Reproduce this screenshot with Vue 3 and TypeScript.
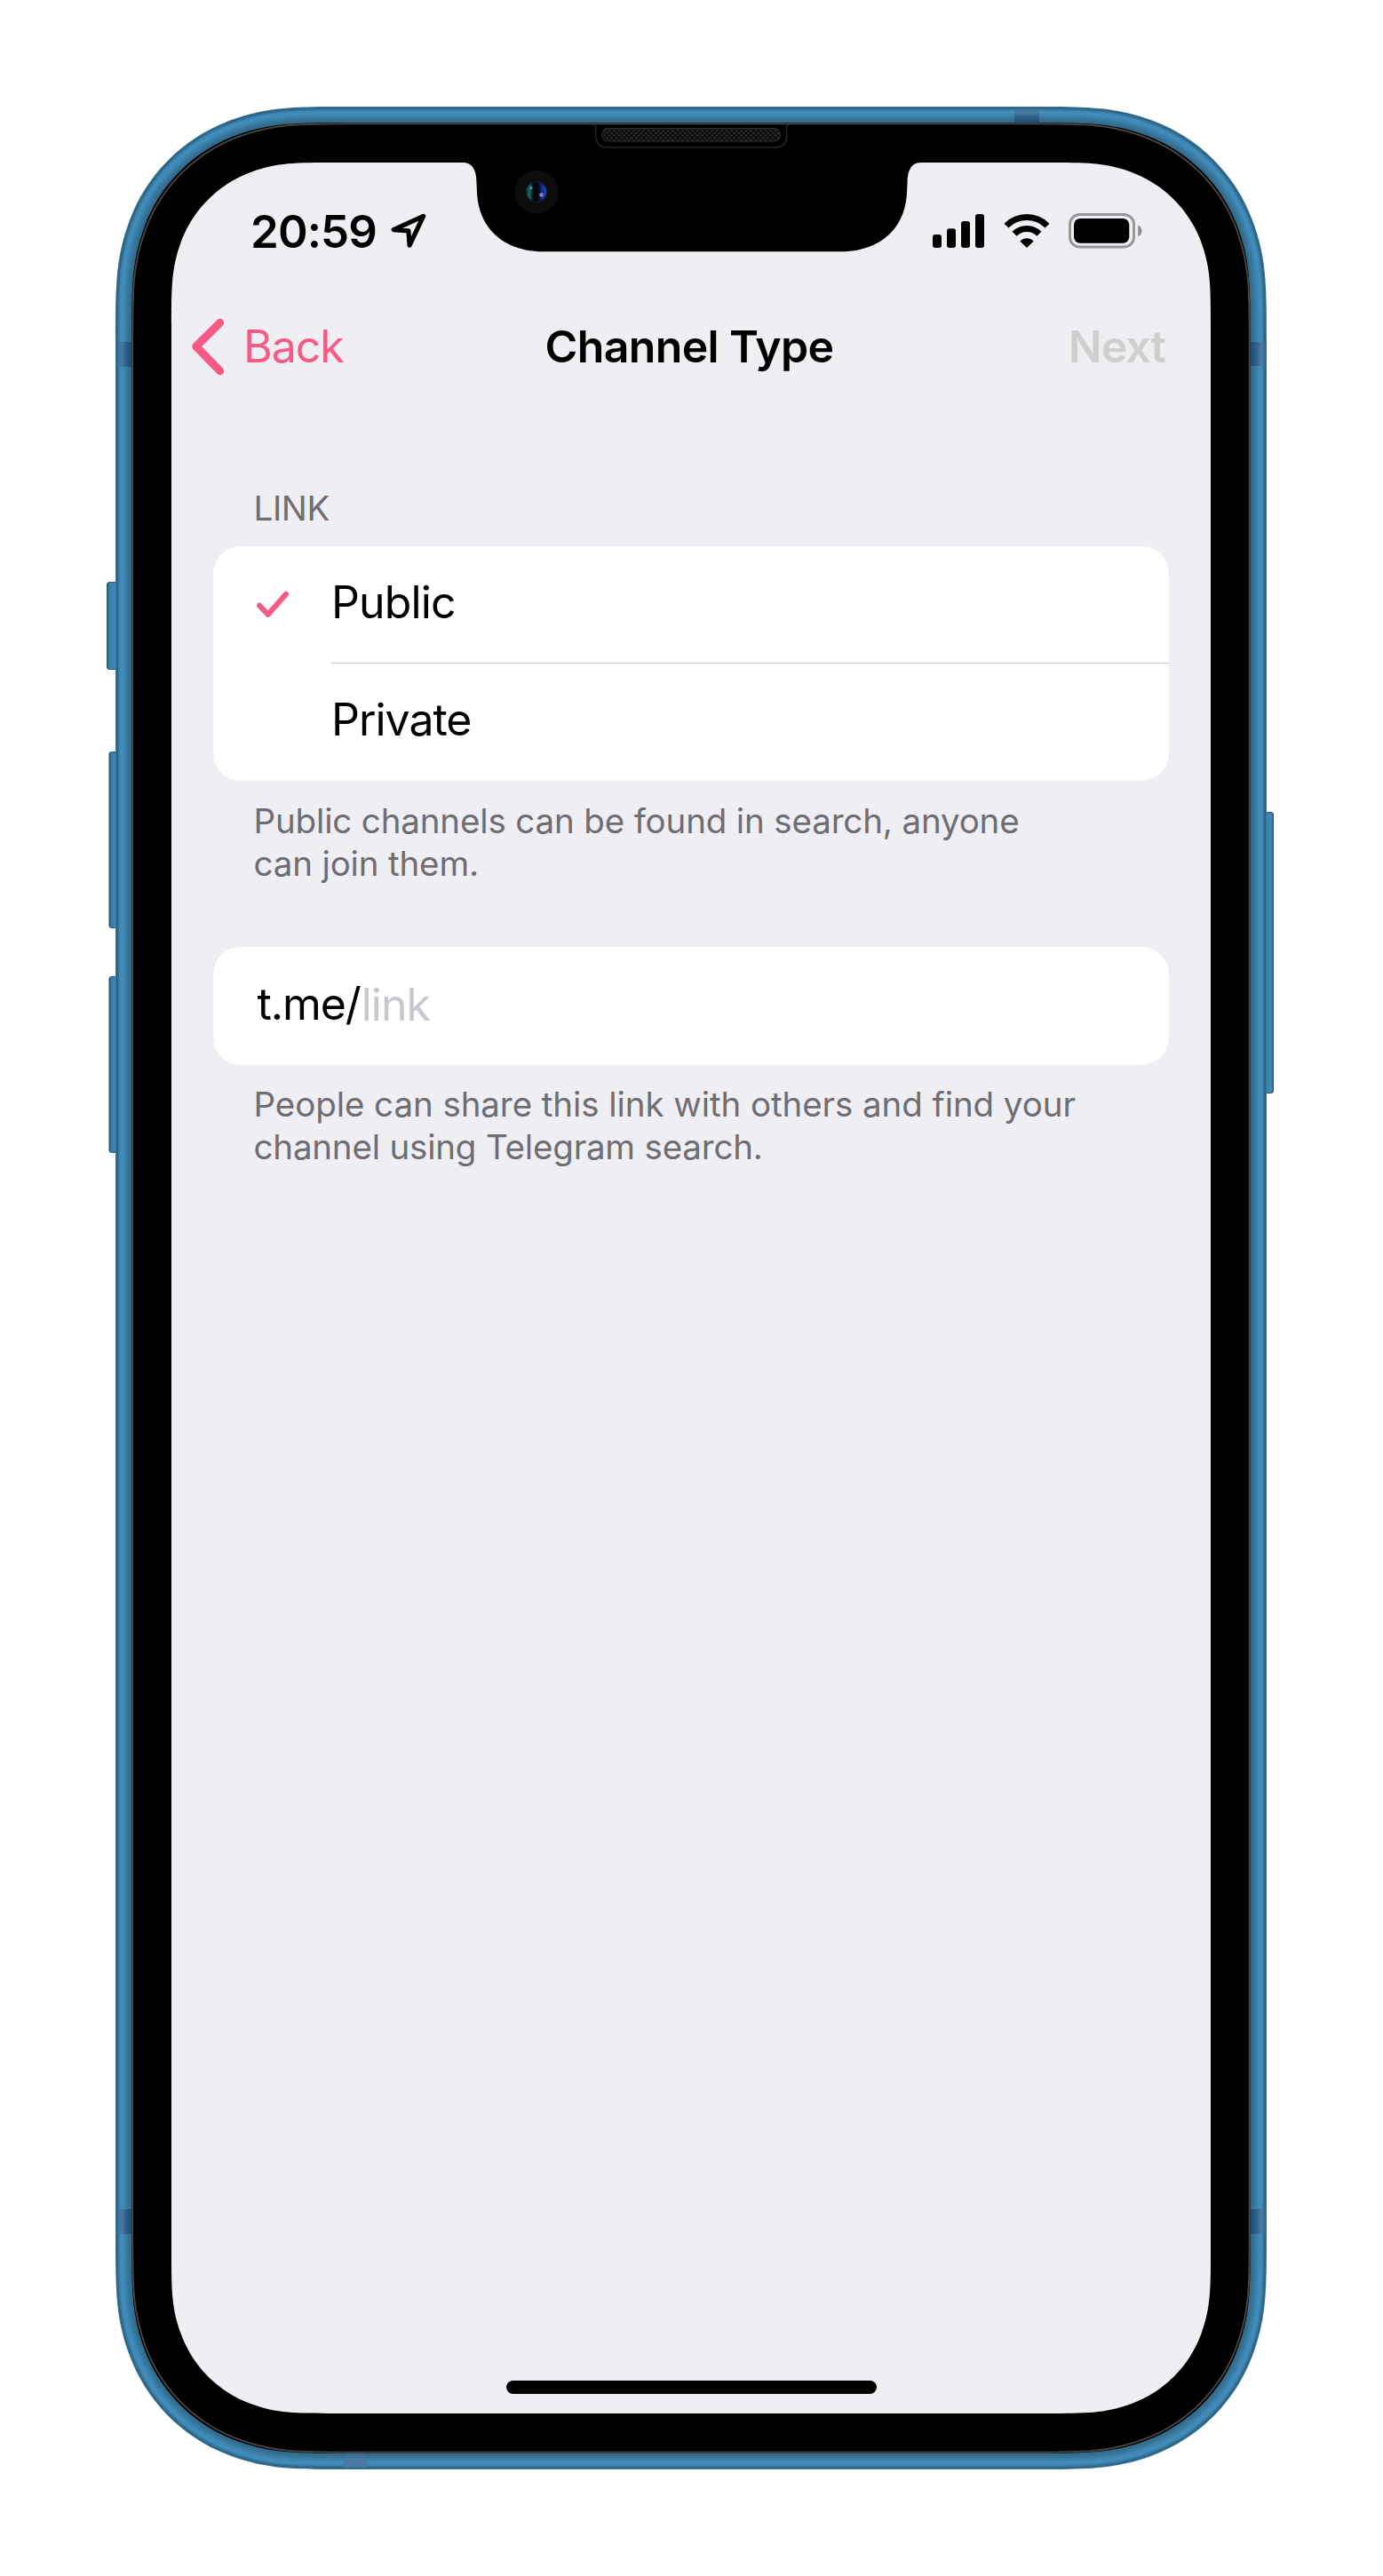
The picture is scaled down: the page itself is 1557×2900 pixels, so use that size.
<script setup lang="ts">
import { ref } from 'vue'

interface Option { id: string; label: string }

const options: Option[] = [
  { id: 'public', label: 'Public' },
  { id: 'private', label: 'Private' },
]
const selected = ref('public')

/** Rounded rectangle with continuous-curvature corners. */
function smoothRect(x: number, y: number, w: number, h: number, r: number): string {
  const a = 1.3 * r, b = 0.98 * r, c = 0.837 * r, d = 0.63149379 * r
  const e = 0.37282383 * r, f = 0.16905956 * r, g = 0.07491139 * r
  const R = x + w, B = y + h
  return [
    `M${x + a} ${y}H${R - a}`,
    `C${R - b} ${y} ${R - c} ${y} ${R - d} ${y + g}`,
    `C${R - e} ${y + f} ${R - f} ${y + e} ${R - g} ${y + d}`,
    `C${R} ${y + c} ${R} ${y + b} ${R} ${y + a}`,
    `V${B - a}`,
    `C${R} ${B - b} ${R} ${B - c} ${R - g} ${B - d}`,
    `C${R - f} ${B - e} ${R - e} ${B - f} ${R - d} ${B - g}`,
    `C${R - c} ${B} ${R - b} ${B} ${R - a} ${B}`,
    `H${x + a}`,
    `C${x + b} ${B} ${x + c} ${B} ${x + d} ${B - g}`,
    `C${x + e} ${B - f} ${x + f} ${B - e} ${x + g} ${B - d}`,
    `C${x} ${B - c} ${x} ${B - b} ${x} ${B - a}`,
    `V${y + a}`,
    `C${x} ${y + b} ${x} ${y + c} ${x + g} ${y + d}`,
    `C${x + f} ${y + e} ${x + e} ${y + f} ${x + d} ${y + g}`,
    `C${x + c} ${y} ${x + b} ${y} ${x + a} ${y}Z`,
  ].join('')
}

const body = (inset: number, r = 205 - inset) =>
  smoothRect(130 + inset, 120 + inset, 1296 - 2 * inset, 2660 - 2 * inset, r)

// Metal rim, from the outer edge towards the glass.
const rim: [number, string][] = [
  [0, '#3b7695'], [1, '#2d627f'], [2, '#31698a'], [3, '#37779f'], [4, '#3c82ae'], [5, '#4089b7'],
  [6, '#428cba'], [8, '#408ab8'], [9, '#3f87b3'], [10, '#3d83ae'], [11, '#3b7fa8'], [12, '#3a7ba2'],
  [13, '#38779c'], [14, '#367397'], [15, '#357093'], [16, '#346d8f'], [17, '#336a8b'], [18.3, '#000'],
]

const cardClip = (h: number) => ({ clipPath: `path("${smoothRect(0, 0, 1076, h, 31)}")` })
</script>

<template>
  <main class="page">
    <svg class="device" width="1557" height="2900" viewBox="0 0 1557 2900" aria-hidden="true">
      <defs>
        <linearGradient id="keyL"><stop offset="0" stop-color="#255a76" /><stop offset=".2" stop-color="#3a80aa" /><stop offset=".65" stop-color="#3f8ab8" /><stop offset="1" stop-color="#336f92" /></linearGradient>
        <linearGradient id="keyR"><stop offset="0" stop-color="#336f92" /><stop offset=".35" stop-color="#3a7ea8" /><stop offset=".8" stop-color="#3f8ab8" /><stop offset="1" stop-color="#2b617f" /></linearGradient>
        <linearGradient id="bandL"><stop offset="0" stop-color="#356c94" /><stop offset=".3" stop-color="#4b7ba3" /><stop offset=".6" stop-color="#2e608c" /><stop offset="1" stop-color="#1d4a70" /></linearGradient>
        <linearGradient id="bandR"><stop offset="0" stop-color="#1d4a70" /><stop offset=".4" stop-color="#2e608c" /><stop offset=".7" stop-color="#4b7ba3" /><stop offset="1" stop-color="#356c94" /></linearGradient>
        <linearGradient id="bandT" x2="0" y2="1"><stop offset="0" stop-color="#356c94" /><stop offset=".3" stop-color="#4b7ba3" /><stop offset=".6" stop-color="#2e608c" /><stop offset="1" stop-color="#1d4a70" /></linearGradient>
        <linearGradient id="bandB" x2="0" y2="1"><stop offset="0" stop-color="#35688f" /><stop offset=".5" stop-color="#4b7ba3" /><stop offset="1" stop-color="#44789f" /></linearGradient>
      </defs>
      <g stroke="#28566f">
        <rect x="120.5" y="655.5" width="14" height="98" rx="2.5" fill="url(#keyL)" />
        <rect x="123" y="846.5" width="14" height="198" rx="2.5" fill="url(#keyL)" />
        <rect x="123" y="1099.5" width="14" height="198" rx="2.5" fill="url(#keyL)" />
        <rect x="1420" y="914.5" width="13.5" height="316" rx="2.5" fill="url(#keyR)" />
      </g>
      <path v-for="[inset, color] in rim" :key="inset" :d="body(inset)" :fill="color" />
      <path :d="body(19.3, 190)" fill="none" stroke="#4b4543" stroke-width="1.8" />
      <rect x="132" y="385" width="16.3" height="28" fill="url(#bandL)" />
      <rect x="132" y="2487" width="16.3" height="28" fill="url(#bandL)" />
      <rect x="1407.7" y="385" width="16.8" height="27" fill="url(#bandR)" />
      <rect x="1407.7" y="2487" width="16.8" height="28" fill="url(#bandR)" />
      <rect x="1142" y="122" width="28" height="16.3" fill="url(#bandT)" />
      <rect x="386.7" y="2761.7" width="27.3" height="16.3" fill="url(#bandB)" />
      <path :d="smoothRect(193, 183, 1170, 2534, 142)" fill="#efeef3" />
    </svg>

    <svg class="device" width="1557" height="300" viewBox="0 0 1557 300" aria-hidden="true">
      <defs>
        <pattern id="mesh" width="5.5" height="5.5" patternUnits="userSpaceOnUse">
          <rect width="5.5" height="5.5" fill="#0a0a0a" />
          <circle cx="1.4" cy="1.4" r="1.1" fill="#3a3a3a" /><circle cx="4.15" cy="4.15" r="1.1" fill="#3a3a3a" />
        </pattern>
        <linearGradient id="lens"><stop offset="0" stop-color="#123d3c" /><stop offset=".15" stop-color="#1f6a64" /><stop offset=".32" stop-color="#02090b" /><stop offset=".58" stop-color="#03050f" /><stop offset=".78" stop-color="#12308c" /><stop offset="1" stop-color="#2546b4" /></linearGradient>
      </defs>
      <path d="M521 182H1037V183C1027 183 1021.5 190 1021.5 206L1021.2 213C1020.5 258 990 283.3 946 283.3H612C568 283.3 537.5 258 536.8 213L536.5 206C536.5 190 531 183 521 183Z" fill="#000" />
      <path d="M668 140.5Q670.8 140.5 670.8 143V153Q670.8 165.8 684 165.8H872.5Q885.7 165.8 885.7 153V143Q885.7 140.5 888.5 140.5" fill="none" stroke="#2d2d2d" stroke-width="1.2" />
      <rect x="677.8" y="144.6" width="200.6" height="14.4" rx="7.2" fill="url(#mesh)" stroke="#2c2c2c" stroke-width="1.2" />
      <circle cx="604" cy="216.2" r="24.3" fill="#0d0d0d" />
      <circle cx="604" cy="216" r="12.5" fill="#171a1e" />
      <circle cx="604" cy="216" r="11" fill="url(#lens)" />
      <circle cx="598" cy="211.5" r="1.5" fill="#3f9bb4" />
      <circle cx="609.5" cy="219.5" r="2.2" fill="#9a7fc4" />
    </svg>

    <section class="screen">
      <header class="status">
        <div class="clock">
          <time>20:59</time>
          <svg width="42" height="46" viewBox="0 0 42 46" aria-label="Location">
            <path d="M4.2 24.6L20.9 25.8L22.1 42.2L37.6 9.4Z" transform="translate(0 -1)" fill="none" stroke="#000" stroke-width="5.2" stroke-linejoin="round" />
          </svg>
        </div>
        <div class="indicators">
          <svg width="58" height="40" viewBox="0 0 58 40" aria-label="Signal">
            <rect x="0" y="24" width="10" height="15" rx="3" /><rect x="16" y="17.3" width="10" height="21.7" rx="3" />
            <rect x="32" y="9" width="10" height="30" rx="3" /><rect x="48" y="1" width="10" height="38" rx="3" />
          </svg>
          <svg class="wifi" width="52" height="40" viewBox="0 0 52 40" aria-label="Wi-Fi">
            <g fill="none" stroke="#000" stroke-width="7">
              <path d="M3.02 14.1A32.4 32.4 0 0 1 48.98 14.1" />
              <path d="M12.1 23.3A19.6 19.6 0 0 1 39.9 23.3" />
            </g>
            <path d="M26 39L18.4 31.4A10.6 10.6 0 0 1 33.6 31.4Z" />
          </svg>
          <svg class="battery" width="83" height="40" viewBox="0 0 83 40" aria-label="Battery">
            <rect x="1.5" y="1.5" width="72" height="36.5" rx="11" fill="none" stroke="#949397" stroke-width="2.8" />
            <rect x="6" y="6" width="62.3" height="27.7" rx="7" />
            <path d="M78.3 13.5Q82.3 15.5 82.3 20T78.3 26.5Z" fill="#8a898d" />
          </svg>
        </div>
      </header>

      <nav class="nav">
        <button class="back" type="button">
          <svg width="40" height="66" viewBox="0 0 40 66" aria-hidden="true">
            <path d="M31.7 6.3L4.7 33L31.7 60.7" fill="none" stroke="#f85a86" stroke-width="9" stroke-linecap="round" stroke-linejoin="round" />
          </svg>
          <span>Back</span>
        </button>
        <h1>Channel Type</h1>
        <button class="next" type="button" disabled>Next</button>
      </nav>

      <h2>LINK</h2>
      <ul class="card" :style="cardClip(264)">
        <li v-for="o in options" :key="o.id" @click="selected = o.id">
          <span class="mark">
            <svg v-if="selected === o.id" width="36" height="30" viewBox="0 0 36 30" aria-label="Selected">
              <path d="M3 16.6L12.8 26.8L33 3.8" fill="none" stroke="#f85a86" stroke-width="6" stroke-linecap="round" stroke-linejoin="round" />
            </svg>
          </span>
          <span class="label" :class="o.id">{{ o.label }}</span>
        </li>
      </ul>
      <p class="hint first">Public channels can be found in search, anyone<br>can join them.</p>

      <div class="card field" :style="cardClip(133)"><span>t.me/</span><span class="placeholder">link</span></div>
      <p class="hint second">People can share this link with others and find your<br><span class="tight">channel using Telegram search.</span></p>

      <div class="home"></div>
    </section>
  </main>
</template>

<style>
body { background: #fff; }
</style>

<style scoped>
.page {
  position: relative;
  box-sizing: border-box;
  width: 1557px;
  height: 2900px;
  padding: 183px 194px 183px 193px;
  overflow: hidden;
  background: #fff;
  color: #000;
  font-family: Inter, "Liberation Sans", sans-serif;
}
.device { position: absolute; top: 0; left: 0; }
.screen {
  position: relative;
  display: flex;
  flex-direction: column;
  width: 1170px;
  height: 2534px;
}
svg { display: block; flex: none; }
.status {
  display: flex;
  justify-content: space-between;
  box-sizing: border-box;
  height: 141px;
  padding: 50px 77px 0 89px;
}
.clock { display: flex; gap: 12px; font-size: 51px; line-height: 56px; font-weight: 600; letter-spacing: -0.86px; }
.clock svg { margin-top: 2px; }
.clock time { width: 145px; }
.indicators { display: flex; padding-top: 7px; }
.wifi { margin-left: 21.5px; }
.battery { margin-left: 21.5px; }
.nav {
  display: grid;
  grid-template-columns: 1fr auto 1fr;
  align-items: center;
  height: 132px;
  padding: 0 51px 0 23px;
}
button { border: 0; padding: 0; background: none; font: inherit; font-size: 50px; line-height: 60px; }
.back { display: flex; align-items: center; gap: 18px; color: #f85a86; letter-spacing: -1px; }
h1 { margin: 0 0 0 24px; font-size: 50px; line-height: 60px; font-weight: 600; letter-spacing: -0.65px; }
.next { justify-self: end; color: #cfcfcf; font-weight: 600; letter-spacing: -1.04px; }
h2 {
  margin: 92px 0 19px 92.5px;
  color: #6d6d72;
  font-size: 38.5px;
  line-height: 48px;
  font-weight: 400;
  letter-spacing: -0.37px;
}
.card { width: 1076px; margin: 0 0 0 47px; padding: 0; background: #fff; list-style: none; font-size: 50px; line-height: 60px; }
.card li { display: flex; height: 132px; }
.mark { display: flex; box-sizing: border-box; width: 133px; padding: 50px 0 0 48.7px; }
.label { flex: 1; box-sizing: border-box; height: 132px; padding-top: 33px; }
.label.public { border-bottom: 1px solid #c8c8c9; letter-spacing: -0.87px; }
.label.private { letter-spacing: -1.02px; }
.hint { margin: 21px 0 0 92.5px; color: #6d6d72; font-size: 38.5px; line-height: 48px; white-space: nowrap; }
.first { margin-bottom: 70px; letter-spacing: -0.15px; }
.second { margin-top: 20px; letter-spacing: -0.07px; }
.tight { letter-spacing: -0.19px; }
.field { display: flex; box-sizing: border-box; height: 133px; padding: 34px 0 0 49.5px; letter-spacing: -1.1px; }
.placeholder { margin: 1px 0 0 1px; color: #c7c7cd; letter-spacing: -1px; }
.home { width: 417px; height: 15px; margin: auto auto 22px; border-radius: 8px; background: #000; }
</style>
